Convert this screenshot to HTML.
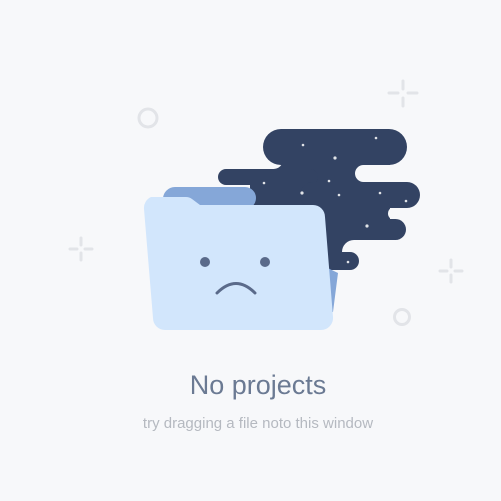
<!DOCTYPE html>
<html><head><style>
html,body{margin:0;padding:0;background:#f7f8fa;width:501px;height:501px;overflow:hidden}
.t{position:absolute;left:0;width:516px;text-align:center;font-family:"Liberation Sans",sans-serif}
</style></head><body>
<svg width="501" height="501" style="position:absolute;left:0;top:0">
<g fill="none" stroke="#e2e4e8" stroke-width="3" stroke-linecap="round">
<circle cx="148" cy="118" r="9"/>
<circle cx="402" cy="317" r="7.5"/>
<path d="M403 81v8M403 98v8M389 93h9M408 93h9"/>
<path d="M81 238v7M81 253v7M70 249h7M85 249h7"/>
<path d="M451 260v7M451 275v7M440 271h7M455 271h7"/>
</g>
<rect x="250" y="150" width="140" height="115" fill="#334363"/>
<g fill="#f7f8fa">
<rect x="355" y="165" width="80" height="17" rx="8.5"/>
<rect x="388" y="207" width="40" height="13" rx="6.5"/>
<rect x="342" y="240" width="80" height="40" rx="12"/>
<rect x="200" y="150" width="83" height="19" rx="9.5"/>
</g>
<g fill="#334363">
<rect x="263" y="129" width="144" height="36" rx="18"/>
<rect x="218" y="169" width="100" height="16" rx="8"/>
<rect x="300" y="182" width="120" height="26" rx="13"/>
<rect x="300" y="219" width="106" height="21" rx="10.5"/>
<rect x="300" y="252" width="59" height="18" rx="9"/>
</g>
<g fill="#fff" opacity="0.85">
<circle cx="376" cy="138" r="1.3"/><circle cx="303" cy="145" r="1.3"/><circle cx="335" cy="158" r="1.6"/>
<circle cx="264" cy="183" r="1.3"/><circle cx="329" cy="181" r="1.3"/><circle cx="302" cy="193" r="1.6"/>
<circle cx="339" cy="195" r="1.3"/><circle cx="380" cy="193" r="1.3"/><circle cx="406" cy="201" r="1.3"/>
<circle cx="367" cy="226" r="1.6"/><circle cx="348" cy="262" r="1.3"/>
</g>
<path d="M163 200a12 12 0 0 1 12-13h70a11 11 0 0 1 0 22h-40L338 273L333 312L175 320Z" fill="#85a7d8"/>
<path d="M151 197h35a10 10 0 0 1 6 2l8 6h113a12 12 0 0 1 12 12l8 100a12 12 0 0 1-12 13h-156a12 12 0 0 1-12-12l-9-109a12 12 0 0 1 7-12Z" fill="#d2e6fc"/>
<circle cx="205" cy="262" r="5" fill="#5a6a8a"/>
<circle cx="265" cy="262" r="5" fill="#5a6a8a"/>
<path d="M217 293q19-19 38 0" fill="none" stroke="#5a6a8a" stroke-width="3" stroke-linecap="round"/>
</svg>
<div class="t" style="top:370px;font-size:27px;color:#6b7a93">No projects</div>
<div class="t" style="top:415px;font-size:15px;color:#b5b9c0">try dragging a file noto this window</div>
</body></html>
